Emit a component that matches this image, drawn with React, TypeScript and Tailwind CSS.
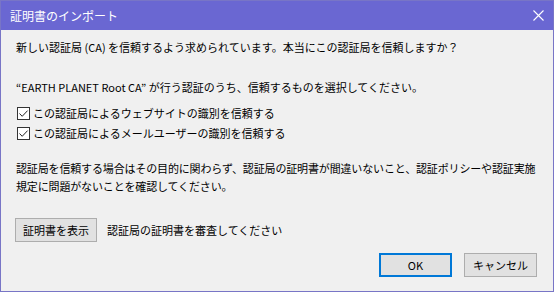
const font = { fontFamily: '"Noto Sans CJK JP", "Noto Sans", sans-serif' }

const Check = () => (
  <span className="w-[13px] h-[13px] border border-[#333333] bg-white flex items-center justify-center shrink-0">
    <svg width="11" height="11" viewBox="0 0 11 11">
      <path d="M1.5 5.5 L4.2 8.3 L9.6 2.6" fill="none" stroke="#222" strokeWidth="1" />
    </svg>
  </span>
)

const CheckRow = ({ label }: { label: string }) => (
  <div className="h-[20px] flex items-center pl-[17px] gap-[3px]">
    <Check />
    <span>{label}</span>
  </div>
)

export default function App() {
  return (
    <div
      className="w-[554px] h-[292px] flex flex-col border border-[#7875c6] bg-[#f0f0f0] text-[11px] text-black leading-[18px] whitespace-nowrap"
      style={font}
    >
      <div className="h-[29px] bg-[#6a67d2] flex items-center justify-between pl-[9px] pr-[9px] text-white text-[12px]">
        <span>証明書のインポート</span>
        <svg width="11" height="11" viewBox="0 0 11 11">
          <path d="M0.5 0.5 L10.5 10.5 M10.5 0.5 L0.5 10.5" stroke="#fff" strokeWidth="1.1" />
        </svg>
      </div>
      <div className="flex flex-col pt-[8px] pl-[15px] pr-[16px]">
        <p className="h-[18px]">新しい認証局 (CA) を信頼するよう求められています。本当にこの認証局を信頼しますか？</p>
        <p className="h-[18px] mt-[22px]">“EARTH PLANET Root CA” が行う認証のうち、信頼するものを選択してください。</p>
      </div>
      <div className="flex flex-col mt-[7px] -ml-[1px]">
        <CheckRow label="この認証局によるウェブサイトの識別を信頼する" />
        <CheckRow label="この認証局によるメールユーザーの識別を信頼する" />
      </div>
      <div className="flex flex-col mt-[16px] pl-[15px] pr-[4px] tracking-[-0.15px]">
        <p>認証局を信頼する場合はその目的に関わらず、認証局の証明書が間違いないこと、認証ポリシーや認証実施</p>
        <p>規定に問題がないことを確認してください。</p>
      </div>
      <div className="flex items-center mt-[23px] pl-[14px] gap-[10px]">
        <button className="w-[82px] h-[24px] bg-[#e1e1e1] border border-[#adadad] text-[11px] leading-none">
          証明書を表示
        </button>
        <span>認証局の証明書を審査してください</span>
      </div>
      <div className="flex justify-end mt-[11px] pr-[16px] gap-[12px]">
        <button className="w-[73px] h-[24px] bg-[#e1e1e1] border-2 border-[#0078d7] text-[11px] leading-none">
          OK
        </button>
        <button className="w-[73px] h-[24px] bg-[#e1e1e1] border border-[#adadad] text-[11px] leading-none">
          キャンセル
        </button>
      </div>
    </div>
  )
}
